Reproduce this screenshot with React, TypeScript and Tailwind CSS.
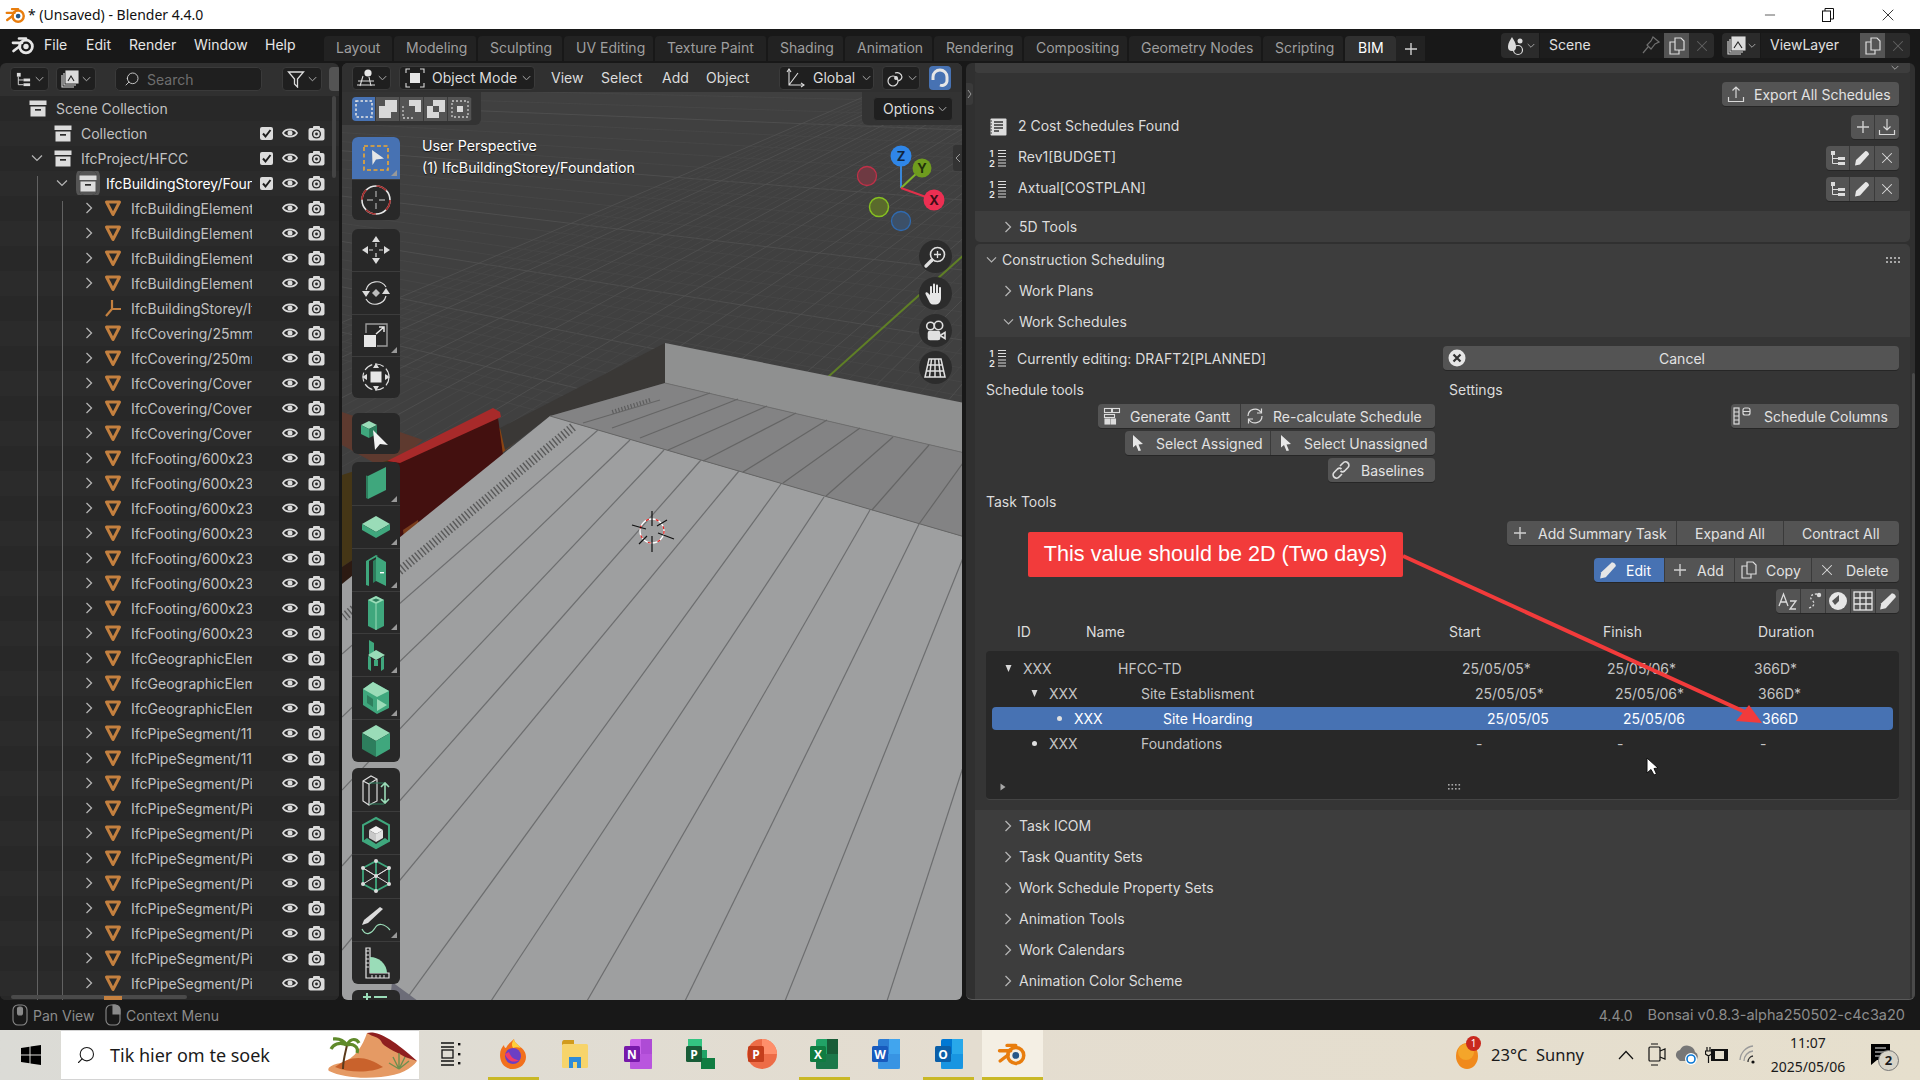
import type { ReactNode } from 'react';
import { Minus, Search, X } from 'lucide-react';

const G = '#3fa77d';
const GL = '#9adcb8';
const GD = '#2d7e5d';
const W = '#dcdcdc';

function ChevR({ c = '#b4b4b4' }: { c?: string }) {
  return (
    <svg className="shrink-0" width="8" height="12" viewBox="0 0 8 12" fill="none" stroke={c} strokeWidth="1.3">
      <path d="M1.5 1 L6.5 6 L1.5 11" />
    </svg>
  );
}

function ChevD({ c = '#b4b4b4', s = 12 }: { c?: string; s?: number }) {
  return (
    <svg className="shrink-0" width={s} height={s * 0.66} viewBox="0 0 12 8" fill="none" stroke={c} strokeWidth="1.3">
      <path d="M1 1.5 L6 6.5 L11 1.5" />
    </svg>
  );
}

function BoxIcon() {
  return (
    <svg width="18" height="17" viewBox="0 0 18 17">
      <rect x="0.5" y="0.5" width="17" height="4.5" fill={W} />
      <rect x="1.5" y="6.5" width="15" height="10" fill={W} />
      <rect x="6" y="9" width="6" height="1.7" fill="#2a2a2a" />
    </svg>
  );
}

function MeshIcon() {
  return (
    <svg width="18" height="18" viewBox="0 0 18 18" fill="none">
      <path d="M2.5 3 H15.5 L9 15.5 Z" stroke="#c4803f" strokeWidth="3" strokeLinejoin="round" />
    </svg>
  );
}

function EmptyIcon() {
  return (
    <svg width="18" height="18" viewBox="0 0 18 18" fill="none" stroke="#c4803f" strokeWidth="2.2">
      <path d="M8 1 V10 H17 M8 10 L2 17" />
    </svg>
  );
}

function EyeIcon() {
  return (
    <svg width="16" height="12" viewBox="0 0 16 12" fill="none">
      <path d="M1 6 C3.5 1.2 12.5 1.2 15 6 C12.5 10.8 3.5 10.8 1 6 Z" stroke={W} strokeWidth="1.7" />
      <circle cx="8" cy="6" r="2.5" fill={W} />
    </svg>
  );
}

function CamIcon() {
  return (
    <svg width="17" height="16" viewBox="0 0 17 16">
      <rect x="0.5" y="3" width="16" height="12.5" rx="2" fill={W} />
      <rect x="5" y="1" width="7" height="3" rx="1" fill={W} />
      <circle cx="8.5" cy="9" r="4.6" fill="#2a2a2a" />
      <circle cx="8.5" cy="9" r="3.2" fill={W} />
      <circle cx="8.5" cy="9" r="1.4" fill="#2a2a2a" />
    </svg>
  );
}

function CheckIcon() {
  return (
    <svg width="13" height="13" viewBox="0 0 13 13" fill="none">
      <rect width="13" height="13" rx="2" fill="#dcdcdc" />
      <path d="M3 6.5 L5.5 9.5 L10.5 3" stroke="#1f1f1f" strokeWidth="2" />
    </svg>
  );
}

function TreeIcon({ s = 18 }: { s?: number }) {
  return (
    <svg width={s} height={s} viewBox="0 0 18 18" fill="none">
      <rect x="2" y="2" width="4" height="4" fill={W} />
      <rect x="9" y="8" width="7" height="3" fill={W} />
      <rect x="9" y="13" width="7" height="3" fill={W} />
      <path d="M3.5 6 V14.5 H9 M3.5 9.5 H9" stroke={W} strokeWidth="1" />
    </svg>
  );
}

function PencilIcon({ s = 16 }: { s?: number }) {
  return (
    <svg width={s} height={s} viewBox="0 0 16 16">
      <path d="M11.5 1 C13.5 1 15 3 15 4.5 L6 14.5 L1 15.5 L2 10 Z" fill="#e6e6e6" />
    </svg>
  );
}

function PlainX() {
  return <X size={18} strokeWidth={1.4} color="#dcdcdc" />;
}

function PlusIcon() {
  return (
    <svg width="14" height="14" viewBox="0 0 14 14" stroke="#cfcfcf" strokeWidth="1.4">
      <path d="M7 1 V13 M1 7 H13" />
    </svg>
  );
}

function ExportIcon({ down = false }: { down?: boolean }) {
  return (
    <svg width="18" height="18" viewBox="0 0 18 18" fill="none" stroke="#d8d8d8" strokeWidth="1.2">
      <path d="M1.5 12 V16.5 H16.5 V12" />
      {down ? <path d="M9 1 V12 M5.5 8.5 L9 12 L12.5 8.5" /> : <path d="M9 13 V2 M5.5 5.5 L9 2 L12.5 5.5" />}
    </svg>
  );
}

function NotebookIcon() {
  return (
    <svg width="17" height="18" viewBox="0 0 17 18">
      <rect x="0.5" y="0.5" width="16" height="17" rx="1" fill={W} />
      <path d="M4 4 H13 M4 7 H13 M4 10 H13 M4 13 H9" stroke="#333" strokeWidth="1.4" />
      <path d="M0.5 3 H2 M0.5 6 H2 M0.5 9 H2 M0.5 12 H2 M0.5 15 H2" stroke="#333" strokeWidth="1" />
    </svg>
  );
}

function NumListIcon() {
  return (
    <svg width="18" height="18" viewBox="0 0 18 18" fill="#e6e6e6">
      <text x="0.5" y="8" fontSize="9.5" fontFamily="Inter, sans-serif" fontWeight="600">1</text>
      <text x="0" y="17.8" fontSize="9.5" fontFamily="Inter, sans-serif" fontWeight="600">2</text>
      <path d="M9 1.5 H17 M9 4.5 H17 M9 7.5 H17 M9 11 H17 M9 14 H17 M9 17 H17" stroke="#dcdcdc" strokeWidth="1.2" />
    </svg>
  );
}

function Arrowhead() {
  return (
    <svg width="14" height="18" viewBox="0 0 14 18">
      <path d="M2 1 L12 10 L7.5 10.5 L10 16.5 L7.5 17 L5 11 L2 13.5 Z" fill="#e6e6e6" />
    </svg>
  );
}

function CopyIcon() {
  return (
    <svg width="18" height="18" viewBox="0 0 18 18" fill="none" stroke="#dcdcdc" strokeWidth="1.2">
      <path d="M7 1 H13 L16 4 V13 H7 Z" />
      <path d="M7 5 H2 V17 H11 V13" />
    </svg>
  );
}

function GanttIcon() {
  return (
    <svg width="18" height="18" viewBox="0 0 18 18" fill="none" stroke="#dcdcdc" strokeWidth="1.1">
      <rect x="1.5" y="1.5" width="7" height="4" />
      <rect x="9.5" y="1.5" width="7" height="4" />
      <rect x="1.5" y="7.5" width="10" height="3" />
      <rect x="2" y="12" width="4.5" height="5" fill="#dcdcdc" />
      <rect x="8" y="12" width="4.5" height="5" fill="#dcdcdc" />
    </svg>
  );
}

function RecalcIcon() {
  return (
    <svg width="18" height="18" viewBox="0 0 18 18" fill="none" stroke="#dcdcdc" strokeWidth="1.2">
      <path d="M2 9 A7 7 0 0 1 15 5.5 M16 9 A7 7 0 0 1 3 12.5" />
      <path d="M15.5 1.5 V6 H11 M2.5 16.5 V12 H7" />
    </svg>
  );
}

function ColumnsIcon() {
  return (
    <svg width="20" height="18" viewBox="0 0 20 18" fill="none" stroke="#dcdcdc" strokeWidth="1.2">
      <rect x="1" y="1" width="5" height="16" />
      <path d="M1 5 H6 M1 9 H6 M1 13 H6" />
      <rect x="10" y="1" width="7" height="7" rx="2" />
      <path d="M10 4.5 H17" />
    </svg>
  );
}

function LinkIcon() {
  return (
    <svg width="18" height="18" viewBox="0 0 18 18" fill="none" stroke="#dcdcdc" strokeWidth="1.7">
      <path d="M8 5 L11 2 A3 3 0 0 1 16 6.5 L12.5 10 A3 3 0 0 1 8.5 10" />
      <path d="M10 13 L7 16 A3 3 0 0 1 2 11.5 L5.5 8 A3 3 0 0 1 9.5 8" />
    </svg>
  );
}

function Btn({
  icon,
  label,
  className = '',
  blue = false,
}: {
  icon?: ReactNode;
  label?: string;
  className?: string;
  blue?: boolean;
}) {
  return (
    <div
      className={`flex h-full items-center whitespace-nowrap border-r border-[#3a3a3a] text-[14px] last:border-r-0 ${
        blue ? 'bg-[#4772b3] text-white' : 'bg-[#545454] text-[#e2e2e2]'
      } ${className}`}
    >
      {icon && <span className="flex shrink-0 items-center justify-center">{icon}</span>}
      {label && <span>{label}</span>}
    </div>
  );
}

function BtnGroup({ children, className = '' }: { children: ReactNode; className?: string }) {
  return (
    <div className={`flex h-[24px] overflow-hidden rounded-[4px] shadow-[0_1px_0_#262626] ${className}`}>
      {children}
    </div>
  );
}

function Dropdown({ children, className = '' }: { children: ReactNode; className?: string }) {
  return (
    <div
      className={`flex h-[24px] shrink-0 items-center rounded-[4px] border border-[#3a3a3a] bg-[#1f1f1f] text-[14px] text-[#dcdcdc] ${className}`}
    >
      {children}
    </div>
  );
}

const ROWS: { name: string; kind: 'mesh' | 'empty' }[] = [
  ...Array(4).fill({ name: 'IfcBuildingElementProxy/Hoarding', kind: 'mesh' }),
  { name: 'IfcBuildingStorey/IfcSite', kind: 'empty' },
  { name: 'IfcCovering/25mm Screed', kind: 'mesh' },
  { name: 'IfcCovering/250mm Slab', kind: 'mesh' },
  ...Array(3).fill({ name: 'IfcCovering/Covering', kind: 'mesh' }),
  ...Array(8).fill({ name: 'IfcFooting/600x230 Strip', kind: 'mesh' }),
  ...Array(3).fill({ name: 'IfcGeographicElement/Site', kind: 'mesh' }),
  ...Array(2).fill({ name: 'IfcPipeSegment/110mm', kind: 'mesh' }),
  ...Array(10).fill({ name: 'IfcPipeSegment/Pipe', kind: 'mesh' }),
];

const LEVEL_W = ['w-[29px]', 'w-[54px]', 'w-[79px]', 'w-[104px]'];

function TreeRow({
  level,
  open,
  closed,
  icon,
  label,
  active,
  check,
  vis = true,
  odd,
}: {
  level: number;
  open?: boolean;
  closed?: boolean;
  icon: ReactNode;
  label: string;
  active?: boolean;
  check?: boolean;
  vis?: boolean;
  odd: boolean;
}) {
  return (
    <div className={`flex h-[25px] shrink-0 items-center ${odd ? 'bg-[#2b2b2b]' : 'bg-[#282828]'}`}>
      <div className="flex w-[252px] items-center overflow-hidden">
        <div className={`flex shrink-0 items-center justify-end pr-[11px] ${LEVEL_W[level]}`}>
          {open && <ChevD />}
          {closed && <ChevR />}
        </div>
        <div
          className={`flex h-[24px] w-[18px] shrink-0 items-center justify-center ${
            active ? 'rounded-[5px] bg-[#555] outline-[3px] outline-[#555]' : ''
          }`}
        >
          {icon}
        </div>
        <span
          className={`ml-[9px] whitespace-nowrap text-[14px] ${active ? 'text-white' : 'text-[#c2c2c2]'}`}
        >
          {label}
        </span>
      </div>
      {vis && (
        <div className="flex items-center">
          <div className="flex w-[26px] justify-center pl-[2px]">{check && <CheckIcon />}</div>
          <div className="flex w-[24px] justify-center">
            <EyeIcon />
          </div>
          <div className="ml-[1px] flex w-[26px] justify-center">
            <CamIcon />
          </div>
        </div>
      )}
    </div>
  );
}

function Outliner() {
  return (
    <div className="relative flex h-full w-[339px] flex-col overflow-hidden rounded-[6px] bg-[#303030] [font-feature-settings:'calt'_0]">
      <div className="flex h-[32.5px] shrink-0 items-center pl-[10px]">
        <Dropdown className="w-[39px] justify-center gap-[3px]">
          <TreeIcon s={17} />
          <ChevD s={9} />
        </Dropdown>
        <Dropdown className="ml-[7px] w-[40px] justify-center gap-[3px]">
          <svg width="18" height="18" viewBox="0 0 18 18" fill="none" stroke="#dcdcdc" strokeWidth="1.1">
            <rect x="5" y="1" width="12" height="12" fill="#dcdcdc" />
            <path d="M7 11 L10 6 L13 11" stroke="#222" />
            <path d="M3 3 V15 H15 M1 5 V17 H13" />
          </svg>
          <ChevD s={9} />
        </Dropdown>
        <Dropdown className="ml-[19px] w-[147px] gap-[7px] rounded-[5px] pl-[8px]">
          <Search size={16} color="#cfcfcf" strokeWidth={1.4} className="-scale-x-100" />
          <span className="text-[#6e6e6e]">Search</span>
        </Dropdown>
        <Dropdown className="ml-[20px] w-[40px] justify-center gap-[3px]">
          <svg width="18" height="18" viewBox="0 0 18 18" fill="none" stroke="#dcdcdc" strokeWidth="1.3">
            <path d="M1.5 2 H16.5 L10.5 9 V17 L7.5 14 V9 Z" />
          </svg>
          <ChevD s={9} />
        </Dropdown>
        <div className="ml-[7px] h-[24px] w-[20px] shrink-0 rounded-[4px] bg-[#545454]" />
      </div>
      <div className="flex min-h-0 flex-1 flex-col">
        <TreeRow level={0} icon={<BoxIcon />} label="Scene Collection" vis={false} odd={false} />
        <TreeRow level={1} icon={<BoxIcon />} label="Collection" check odd />
        <TreeRow level={1} open icon={<BoxIcon />} label="IfcProject/HFCC" check odd={false} />
        <TreeRow level={2} open icon={<BoxIcon />} label="IfcBuildingStorey/Foundation" active check odd />
        {ROWS.map((r, i) => (
          <TreeRow
            key={i}
            level={3}
            closed={r.kind === 'mesh'}
            icon={r.kind === 'mesh' ? <MeshIcon /> : <EmptyIcon />}
            label={r.name}
            odd={i % 2 === 1}
          />
        ))}
      </div>
      <div className="absolute bottom-0 left-[37px] top-[113px] w-px bg-[#626262]" />
      <div className="absolute bottom-0 left-[62px] top-[138px] w-px bg-[#626262]" />
      <div className="absolute right-[3px] top-[33px] h-[82px] w-[4px] rounded bg-[#444]" />
      <div className="absolute bottom-[1px] left-[11px] h-[4px] w-[176px] rounded bg-[#4a4a4a]" />
      <div className="absolute bottom-0 left-[104px] h-[4px] w-[18px] bg-[#c4803f]" />
    </div>
  );
}

function SceneSvg() {
  const gridA = Array.from({ length: 34 }, (_, i) => i);
  const gridB = Array.from({ length: 70 }, (_, i) => i);
  const floorLines = [
    [598, 430, 342, 654],
    [630, 440, 342, 717],
    [664, 450, 342, 790],
    [701, 460, 342, 866],
    [739, 471, 342, 950],
    [781, 484, 405, 1001],
    [824, 497, 491, 1001],
    [870, 510, 587, 1001],
    [919, 524, 685, 1001],
    [965, 553, 785, 1001],
    [965, 761, 887, 1001],
  ];
  const topLines = [
    [919, 524, 965, 460],
    [872, 510, 929, 445],
    [826, 496, 893, 437],
    [783, 483, 860, 428],
    [743, 472, 827, 420],
    [703, 461, 796, 413],
    [668, 450, 767, 406],
    [640, 438, 738, 399],
    [612, 428, 710, 393],
    [583, 423, 660, 400],
  ];
  return (
    <svg
      className="absolute inset-0"
      width="620"
      height="937"
      viewBox="342 63 620 937"
    >
      <rect x="342" y="63" width="620" height="937" fill="#404040" />
      {gridA.map((i) => {
        const y = 60 + i * 14;
        return (
          <line
            key={i}
            x1={-800}
            y1={60}
            x2={962}
            y2={y}
            stroke={i % 5 === 0 ? '#525252' : '#474747'}
            strokeWidth="0.8"
          />
        );
      })}
      {gridB.map((i) => {
        const x = -300 + i * 24;
        return (
          <line
            key={i}
            x1={1400}
            y1={-135}
            x2={x}
            y2={600}
            stroke={i % 5 === 0 ? '#525252' : '#474747'}
            strokeWidth="0.8"
          />
        );
      })}
      <line x1="828" y1="377" x2="965" y2="254" stroke="#5f7f26" strokeWidth="2" />
      <polygon points="342,412 423,440 387,470 342,445" fill="#5e3a2f" />
      <polygon points="342,475 405,455 405,525 342,567" fill="#453616" />
      <polygon points="342,567 405,525 405,560 342,602" fill="#2c1a12" />
      <polygon points="497,428 525,433 500,455" fill="#8a4413" />
      <polygon points="385,463 497,410 503,455 402,540 385,540" fill="#43100f" />
      <polygon points="387,461 493,408 500,412 501,417 400,463" fill="#a82a2a" />
      <polygon points="403,530 418,520 420,535 405,545" fill="#7a3d1c" />
      <polygon points="665,343 500,428 505,450 550,416 665,383" fill="#3a3836" />
      <polygon points="665,343 965,403 965,453 665,383" fill="#8f9090" />
      <polygon points="550,416 665,383 965,453 965,537" fill="#838384" />
      <polygon points="550,416 965,537 965,1001 342,1001 342,584" fill="#9e9fa0" />
      <line x1="550" y1="416" x2="965" y2="537" stroke="#666" strokeWidth="1" />
      <line x1="665" y1="383" x2="965" y2="453" stroke="#6f6f6f" strokeWidth="1" />
      {floorLines.map((l, i) => (
        <line key={i} x1={l[0]} y1={l[1]} x2={l[2]} y2={l[3]} stroke="#6d6e6f" strokeWidth="1.2" />
      ))}
      {topLines.map((l, i) => (
        <line key={i} x1={l[0]} y1={l[1]} x2={l[2]} y2={l[3]} stroke="#656565" strokeWidth="1.2" />
      ))}
      <line x1="573" y1="427" x2="344" y2="617" stroke="#2d2d2d" strokeWidth="9" strokeDasharray="1.4 2.4" opacity="0.6" />
      <line x1="650" y1="400" x2="612" y2="412" stroke="#444" strokeWidth="4" strokeDasharray="1.2 2" opacity="0.6" />
      <polygon points="390,1001 392,982 418,1001" fill="#6c6c78" />

      {/* 3d cursor */}
      <circle cx="652" cy="531" r="12" fill="none" stroke="#fff" strokeWidth="1.3" />
      <circle cx="652" cy="531" r="12" fill="none" stroke="#e02020" strokeWidth="1.3" strokeDasharray="3 7" />
      <path
        d="M652 511 V526 M652 536 V552 M632 525 L646 529 M658 533 L674 539 M667 520 L657 526 M647 536 L639 544"
        stroke="#111"
        strokeWidth="1.2"
      />

      {/* gizmo */}
      <line x1="901" y1="188" x2="901" y2="165" stroke="#3a86d8" strokeWidth="2" />
      <line x1="901" y1="188" x2="918" y2="172" stroke="#7fb32a" strokeWidth="2" />
      <line x1="901" y1="188" x2="926" y2="197" stroke="#e0304a" strokeWidth="2" />
      <circle cx="867" cy="176" r="9.5" fill="#6e3a42" stroke="#c03048" strokeWidth="1.3" />
      <circle cx="879" cy="207" r="9.5" fill="#5a6a2c" stroke="#85c020" strokeWidth="1.5" />
      <circle cx="901" cy="221" r="9.5" fill="#3c5068" stroke="#2f6ab0" strokeWidth="1.3" />
      <circle cx="901" cy="156" r="10.5" fill="#2f86e8" />
      <circle cx="922" cy="168" r="9.5" fill="#6f9c1e" />
      <circle cx="934" cy="200" r="10.5" fill="#ec2f52" />
      <text x="901" y="161" textAnchor="middle" fontSize="13" fontWeight="700" fontFamily="Inter, sans-serif" fill="#12263f">Z</text>
      <text x="922" y="173" textAnchor="middle" fontSize="13" fontWeight="700" fontFamily="Inter, sans-serif" fill="#22300a">Y</text>
      <text x="934" y="205" textAnchor="middle" fontSize="13" fontWeight="700" fontFamily="Inter, sans-serif" fill="#3f0c16">X</text>
    </svg>
  );
}

function ToolCell({
  children,
  h,
  blue,
  corner,
}: {
  children: ReactNode;
  h: string;
  blue?: boolean;
  corner?: boolean;
}) {
  return (
    <div
      className={`relative flex w-full items-center justify-center border-t border-[#3c3c3c] first:border-t-0 ${h} ${
        blue ? 'bg-[#4772b3]' : ''
      }`}
    >
      {children}
      {corner && (
        <svg className="absolute bottom-[3px] right-[3px]" width="6" height="6" viewBox="0 0 6 6">
          <path d="M6 0 V6 H0 Z" fill="#999" />
        </svg>
      )}
    </div>
  );
}

function ToolGroup({ children, className = '' }: { children: ReactNode; className?: string }) {
  return <div className={`w-[48px] overflow-hidden rounded-[6px] bg-[#282828] ${className}`}>{children}</div>;
}

function Toolbar() {
  return (
    <div className="flex w-[48px] shrink-0 flex-col">
      <ToolGroup>
        <ToolCell h="h-[42px]" blue corner>
          <svg width="30" height="30" viewBox="0 0 30 30" fill="none">
            <rect x="3" y="3" width="24" height="24" stroke="#f0a830" strokeWidth="1.6" strokeDasharray="4 2.5" />
            <path d="M11 7 L23 15.5 L15 16.5 L11.5 22 Z" fill="#e6e6e6" />
          </svg>
        </ToolCell>
        <ToolCell h="h-[41px]">
          <svg width="32" height="32" viewBox="0 0 32 32" fill="none">
            <circle cx="16" cy="16" r="14" stroke="#e6e6e6" strokeWidth="1.6" />
            <circle cx="16" cy="16" r="14" stroke="#a02a2a" strokeWidth="1.7" strokeDasharray="11 11" />
            <path d="M16 7 V13 M16 19 V25 M7 16 H13 M19 16 H25" stroke="#9a9a9a" strokeWidth="1.4" />
          </svg>
        </ToolCell>
      </ToolGroup>
      <ToolGroup className="mt-[9px]">
        <ToolCell h="h-[42.25px]">
          <svg width="30" height="30" viewBox="0 0 30 30" fill="#dcdcdc">
            <path d="M15 1 L19 7 H11 Z M15 29 L19 23 H11 Z M1 15 L7 11 V19 Z M29 15 L23 11 V19 Z" />
            <path d="M15 8 V12 M15 18 V22 M8 15 H12 M18 15 H22" stroke="#dcdcdc" strokeWidth="1.2" />
          </svg>
        </ToolCell>
        <ToolCell h="h-[42.25px]">
          <svg width="30" height="30" viewBox="0 0 30 30" fill="none" stroke="#dcdcdc" strokeWidth="1.2">
            <path d="M5 12 A11 11 0 0 1 25 9 M25 18 A11 11 0 0 1 5 21" />
            <path d="M1 13 H9 L5 19 Z M21 16 H29 L25 10 Z" fill="#dcdcdc" stroke="none" />
            <path d="M15 11 L19 15 L15 19 L11 15 Z" fill="#bdbdbd" stroke="none" />
          </svg>
        </ToolCell>
        <ToolCell h="h-[42.25px]" corner>
          <svg width="26" height="26" viewBox="0 0 26 26" fill="none">
            <path d="M3 11 V2 H24 V24 H14" stroke="#9a9a9a" strokeWidth="1.4" />
            <rect x="1" y="13" width="12" height="12" fill="#e6e6e6" />
            <path d="M13 12 L21 5 M16 5 H21 V10" stroke="#e6e6e6" strokeWidth="1.5" />
          </svg>
        </ToolCell>
        <ToolCell h="h-[42.25px]">
          <svg width="32" height="32" viewBox="0 0 32 32" fill="none">
            <circle cx="16" cy="16" r="13" stroke="#dcdcdc" strokeWidth="1.2" strokeDasharray="9 3" />
            <rect x="10.5" y="10.5" width="11" height="11" fill="#e6e6e6" />
            <path d="M16 2 L19 7 H13 Z M16 30 L19 25 H13 Z M2 16 L7 13 V19 Z M30 16 L25 13 V19 Z" fill="#dcdcdc" />
          </svg>
        </ToolCell>
      </ToolGroup>
      <ToolGroup className="mt-[15px]">
        <ToolCell h="h-[41px]">
          <svg width="34" height="34" viewBox="0 0 34 34">
            <path d="M10 4 L18 8 L10 12 L2 8 Z" fill={GL} />
            <path d="M2 8 L10 12 V21 L2 17 Z" fill={G} />
            <path d="M10 12 L18 8 V17 L10 21 Z" fill={GD} />
            <path d="M14 13 L29 28 L21 27 L16 33 Z" fill="#f2f2f2" />
          </svg>
        </ToolCell>
      </ToolGroup>
      <ToolGroup className="mt-[8px]">
        <ToolCell h="h-[42.86px]" corner>
          <svg width="24" height="34" viewBox="0 0 24 34">
            <path d="M4 10 L22 1 V24 L4 33 Z" fill={G} />
            <path d="M2 9.5 L4 10 V33 L2 32 Z" fill={GD} />
          </svg>
        </ToolCell>
        <ToolCell h="h-[42.86px]" corner>
          <svg width="30" height="24" viewBox="0 0 30 24">
            <path d="M15 1 L29 9 L15 17 L1 9 Z" fill={GL} />
            <path d="M1 9 L15 17 V23 L1 15 Z" fill={G} />
            <path d="M29 9 L15 17 V23 L29 15 Z" fill={G} />
          </svg>
        </ToolCell>
        <ToolCell h="h-[42.86px]" corner>
          <svg width="24" height="34" viewBox="0 0 24 34">
            <path d="M2 8 L12 2 L14 3 L5 8 V33 L2 32 Z" fill={G} />
            <path d="M12 3 L22 9 V33 L12 28 Z" fill={G} />
            <path d="M9 8 L12 6 V28 L9 30 Z" fill={GD} />
            <rect x="16" y="19" width="4" height="1.4" fill="#fff" />
          </svg>
        </ToolCell>
        <ToolCell h="h-[42.86px]" corner>
          <svg width="18" height="36" viewBox="0 0 18 36">
            <path d="M9 1 L17 5 V31 L9 35 L1 31 V5 Z" fill={G} />
            <path d="M9 1 L17 5 L9 9 L1 5 Z" fill={GL} />
            <path d="M9 3.5 L13 5 L9 7 L5 5 Z" fill={GD} />
            <path d="M9 9 V35" stroke={GL} strokeWidth="1" />
          </svg>
        </ToolCell>
        <ToolCell h="h-[42.86px]" corner>
          <svg width="20" height="34" viewBox="0 0 20 34" fill={G}>
            <path d="M3 2 L8 5 V17 L3 20 Z" />
            <path d="M10 12 L19 17 L10 22 L2 17 Z" fill={GL} />
            <path d="M2 18 L5 20 V33 L2 31 Z M15 20 L18 18 V31 L15 33 Z M8 22 H12 V28 H8 Z" />
          </svg>
        </ToolCell>
        <ToolCell h="h-[42.86px]" corner>
          <svg width="30" height="34" viewBox="0 0 30 34">
            <path d="M12 1 L28 10 V27 L16 33 L2 24 V8 Z" fill={G} />
            <path d="M12 1 L28 10 L16 16 L2 8 Z" fill={GL} />
            <path d="M16 18 L26 24 L16 30 Z" fill={GL} />
            <path d="M6 14 L12 18 V26 L6 22 Z" fill={GD} />
          </svg>
        </ToolCell>
        <ToolCell h="h-[42.86px]">
          <svg width="30" height="34" viewBox="0 0 30 34">
            <path d="M15 1 L29 9 L15 17 L1 9 Z" fill={GL} />
            <path d="M1 9 L15 17 V33 L1 25 Z" fill={GD} />
            <path d="M29 9 L15 17 V33 L29 25 Z" fill={G} />
          </svg>
        </ToolCell>
      </ToolGroup>
      <ToolGroup className="mt-[6px]">
        <ToolCell h="h-[43.2px]">
          <svg width="32" height="32" viewBox="0 0 32 32" fill="none" stroke="#dcdcdc" strokeWidth="1.2">
            <path d="M3 7 L11 2 L17 5 V27 L9 31 L3 27 Z M3 7 L9 10 L17 5 M9 10 V31" />
            <path d="M9 9 H24 M9 30 H24" stroke={GD} />
            <path d="M25 9 V29 M21 13 L25 9 L29 13 M21 25 L25 29 L29 25" stroke={GL} strokeWidth="1.6" />
          </svg>
        </ToolCell>
        <ToolCell h="h-[43.2px]">
          <svg width="30" height="34" viewBox="0 0 30 34" fill="none">
            <path d="M15 2 L28 9 V25 L15 32 L2 25 V9 Z" stroke={G} strokeWidth="2" />
            <path d="M2 25 L15 32 L28 25 L24 22 L15 28 L6 22 Z" fill={G} />
            <path d="M15 10 L22 14 L15 18 L8 14 Z" fill="#f2f2f2" />
            <path d="M8 14 L15 18 V26 L8 22 Z" fill="#c8c8c8" />
            <path d="M22 14 L15 18 V26 L22 22 Z" fill="#e0e0e0" />
          </svg>
        </ToolCell>
        <ToolCell h="h-[43.2px]">
          <svg width="30" height="34" viewBox="0 0 30 34" fill="none">
            <path d="M15 2 L28 9 V25 L15 32 L2 25 V9 Z M15 2 V32" stroke={G} strokeWidth="1.8" />
            <path d="M2 9 L28 25 M28 9 L2 25 M15 17 L2 9 M15 17 L28 9" stroke="#dcdcdc" strokeWidth="1" />
            {[[15, 2], [28, 9], [28, 25], [15, 32], [2, 25], [2, 9], [15, 17]].map(([x, y]) => (
              <circle key={`${x}-${y}`} cx={x} cy={y} r="2" fill="#dcdcdc" />
            ))}
          </svg>
        </ToolCell>
        <ToolCell h="h-[43.2px]" corner>
          <svg width="32" height="30" viewBox="0 0 32 30" fill="none">
            <path d="M20 2 L23 4 L8 18 L2 20 L4 15 Z" fill="#dcdcdc" />
            <path d="M2 24 C6 32 12 28 15 23 C18 18 24 18 30 25" stroke={GL} strokeWidth="1.2" />
          </svg>
        </ToolCell>
        <ToolCell h="h-[43.2px]">
          <svg width="28" height="32" viewBox="0 0 28 32" fill="none">
            <path d="M4 1 H8 V26 H27 V31 H4 Z" stroke="#e6e6e6" strokeWidth="1.2" />
            <path d="M8 10 A17 17 0 0 1 25 26 H8 Z" fill={GL} />
            <path d="M4 4 H7 M4 8 H7 M4 12 H7 M4 16 H7 M4 20 H7 M10 31 V28 M14 31 V28 M18 31 V28 M22 31 V28" stroke="#e6e6e6" strokeWidth="1" />
          </svg>
        </ToolCell>
      </ToolGroup>
      <ToolGroup className="mt-[6px]">
        <div className="flex h-[40px] items-start gap-[3px] pl-[10px] pt-[2px]">
          <svg width="26" height="12" viewBox="0 0 26 12" stroke={GL} strokeWidth="2">
            <path d="M5 1 V9 M1 5 H9 M12 5 H25" />
          </svg>
        </div>
      </ToolGroup>
    </div>
  );
}

function NavCircle({ children }: { children: ReactNode }) {
  return (
    <div className="flex h-[33px] w-[33px] items-center justify-center rounded-full bg-[#2c2c2c]">{children}</div>
  );
}

function Viewport() {
  return (
    <div className="relative h-full w-[620px] shrink-0 overflow-hidden rounded-[6px] font-['Inter',sans-serif]">
      <SceneSvg />
      <div className="relative z-10 flex h-[29px] items-center bg-[#303030] pl-[10px] text-[14px] text-[#dcdcdc]">
        <Dropdown className="w-[39px] justify-center gap-[2px]">
          <svg width="20" height="20" viewBox="0 0 20 20" fill="none" stroke="#dcdcdc" strokeWidth="1.1">
            <circle cx="12" cy="5" r="3.6" fill="#e6e6e6" stroke="none" />
            <path d="M2 13 H18 M7 8 L4 18 M13 9 L15 18 M1 17 H19" />
          </svg>
          <ChevD s={9} />
        </Dropdown>
        <Dropdown className="ml-[8px] w-[136px] pl-[5px]">
          <svg width="20" height="20" viewBox="0 0 20 20" fill="none" stroke="#dcdcdc" strokeWidth="1.1">
            <rect x="5" y="5" width="10" height="10" fill="#e6e6e6" stroke="none" />
            <path d="M1 5 V1 H5 M15 1 H19 V5 M19 15 V19 H15 M5 19 H1 V15" />
          </svg>
          <span className="ml-[7px]">Object Mode</span>
          <span className="ml-auto mr-[3px]">
            <ChevD s={9} />
          </span>
        </Dropdown>
        <span className="ml-[16px] w-[50px]">View</span>
        <span className="w-[61px]">Select</span>
        <span className="w-[44px]">Add</span>
        <span className="w-[73px]">Object</span>
        <Dropdown className="w-[95px] pl-[5px]">
          <svg width="20" height="20" viewBox="0 0 20 20" fill="none" stroke="#dcdcdc" strokeWidth="1.1">
            <path d="M4 1 V17 H19 M4 17 L13 5" />
            <path d="M2 4 L4 1 L6 4 M16 15 L19 17 L16 19" />
          </svg>
          <span className="ml-[8px]">Global</span>
          <span className="ml-auto mr-[2px]">
            <ChevD s={9} />
          </span>
        </Dropdown>
        <Dropdown className="ml-[8px] w-[38px] justify-center gap-[2px]">
          <svg width="20" height="20" viewBox="0 0 20 20" fill="none" stroke="#dcdcdc" strokeWidth="1.2">
            <circle cx="7" cy="13" r="5" />
            <path d="M9 5 A5 5 0 0 1 16 9 A5 5 0 0 1 12 13" />
            <circle cx="10" cy="10" r="1.3" fill="#dcdcdc" />
          </svg>
          <ChevD s={9} />
        </Dropdown>
        <div className="ml-[9px] flex h-[24px] w-[22px] items-center justify-center rounded-[4px] bg-[#4772b3]">
          <svg width="20" height="20" viewBox="0 0 20 20" fill="none" stroke="#e6e6e6" strokeWidth="3">
            <path d="M3 12 V9 A7 7 0 0 1 17 9 V12 A5 5 0 0 1 10 17" />
          </svg>
        </div>
      </div>
      <div className="relative z-10 flex h-[34px] items-start justify-between">
        <div className="flex h-[33px] w-[139px] items-center rounded-br-[6px] bg-[#333] pl-[10px]">
          <div className="flex h-[24px] overflow-hidden rounded-[4px]">
            {[0, 1, 2, 3, 4].map((i) => (
              <div
                key={i}
                className={`flex h-full w-[24px] items-center justify-center border-r border-[#3a3a3a] ${
                  i === 0 ? 'bg-[#4772b3]' : 'bg-[#545454]'
                }`}
              >
                <svg width="20" height="20" viewBox="0 0 20 20" fill="none">
                  {i === 0 && <rect x="2" y="2" width="16" height="16" stroke="#e6e6e6" strokeWidth="1.5" strokeDasharray="2.5 2" />}
                  {i === 1 && <path d="M7 1 H19 V13 H13 V19 H1 V7 H7 Z" fill="#d8d8d8" />}
                  {i === 2 && (
                    <>
                      <path d="M7 1 H19 V13 H13 V7 H7 Z" fill="#d8d8d8" />
                      <path d="M1 7 V19 H13" stroke="#c8c8c8" strokeWidth="1.3" strokeDasharray="2 2" />
                    </>
                  )}
                  {i === 3 && (
                    <>
                      <path d="M7 1 H19 V13 H13 V7 H7 Z" fill="#d8d8d8" />
                      <path d="M1 7 H7 V13 H13 V19 H1 Z" fill="#d8d8d8" />
                    </>
                  )}
                  {i === 4 && (
                    <>
                      <rect x="2" y="2" width="16" height="16" stroke="#c8c8c8" strokeWidth="1.3" strokeDasharray="2 2" />
                      <rect x="7" y="7" width="6" height="6" fill="#d8d8d8" />
                    </>
                  )}
                </svg>
              </div>
            ))}
          </div>
        </div>
        <div className="flex h-[33px] w-[100px] items-center rounded-bl-[6px] bg-[#333] pl-[11px]">
          <Dropdown className="w-[80px] border-[#333] pl-[9px]">
            <span>Options</span>
            <span className="ml-auto mr-[5px]">
              <ChevD s={9} />
            </span>
          </Dropdown>
        </div>
      </div>
      <div className="relative z-10 flex pl-[10px] pt-[11px]">
        <Toolbar />
        <div className="ml-[22px] -mt-[2px] flex flex-col text-[14.2px] text-white [text-shadow:0_1px_1px_#111]">
          <span className="leading-[22px]">User Perspective</span>
          <span className="leading-[22px]">(1) IfcBuildingStorey/Foundation</span>
        </div>
      </div>
      <div className="absolute right-[10.5px] top-[177px] z-10 flex flex-col gap-[4px]">
        <NavCircle>
          <svg width="24" height="24" viewBox="0 0 24 24" fill="none" stroke="#e0e0e0">
            <circle cx="14.5" cy="9.5" r="7" strokeWidth="1.6" />
            <path d="M9 15 L3 21" strokeWidth="3.4" strokeLinecap="round" />
            <path d="M14.5 6 V13 M11 9.5 H18" strokeWidth="1.3" />
          </svg>
        </NavCircle>
        <NavCircle>
          <svg width="22" height="24" viewBox="0 0 22 24" fill="#e6e6e6">
            <path d="M6 21 L1.5 12 C1 10 3 9.5 4 11 L6 13 V5 C6 3.5 8 3.5 8 5 V11 H9 V2.5 C9 1 11 1 11 2.5 V11 H12 V3.5 C12 2 14 2 14 3.5 V11 H15 V6 C15 4.5 17 4.5 17 6 V16 C17 19 15 22.5 12 22.5 H9 C8 22.5 7 22 6 21 Z" />
          </svg>
        </NavCircle>
        <NavCircle>
          <svg width="24" height="24" viewBox="0 0 24 24" fill="none" stroke="#e0e0e0" strokeWidth="1.6">
            <circle cx="7.5" cy="7" r="3.8" />
            <circle cx="15.5" cy="6.5" r="4.2" />
            <rect x="5.5" y="12.5" width="11" height="8" rx="1.5" fill="#e0e0e0" />
            <path d="M17 16.5 L22 13.5 V19.5 Z" />
          </svg>
        </NavCircle>
        <NavCircle>
          <svg width="24" height="22" viewBox="0 0 24 22" fill="none" stroke="#e0e0e0" strokeWidth="1.5">
            <path d="M6 2 H18 L22 20 H2 Z M12 2 V20 M8.5 2 L6.5 20 M15.5 2 L17.5 20 M4.6 8 H19.4 M3.5 14 H20.5" />
          </svg>
        </NavCircle>
      </div>
      <div className="absolute right-0 top-[82px] z-10 flex h-[26px] w-[9px] items-center justify-center rounded-l-[3px] bg-[#333]">
        <svg width="6" height="10" viewBox="0 0 6 10" fill="none" stroke="#999">
          <path d="M5 1 L1 5 L5 9" />
        </svg>
      </div>
    </div>
  );
}

function PropRow({
  label,
  open,
  sub = true,
  children,
}: {
  label: string;
  open?: boolean;
  sub?: boolean;
  children?: ReactNode;
}) {
  return (
    <div className={`flex h-[31px] shrink-0 items-center text-[14px] text-[#dcdcdc] ${sub ? 'pl-[29px]' : 'pl-[12px]'}`}>
      <div className="flex w-[8px] justify-center">{open ? <ChevD s={11} /> : <ChevR />}</div>
      <span className="ml-[7px]">{label}</span>
      {children}
    </div>
  );
}

function TaskRow({
  marker,
  tri,
  xx,
  nameW,
  name,
  start,
  startW,
  finish,
  finishW,
  dur,
  sel,
}: {
  marker: string;
  tri?: boolean;
  xx: string;
  nameW: string;
  name: string;
  start: string;
  startW: string;
  finish: string;
  finishW: string;
  dur: string;
  sel?: boolean;
}) {
  return (
    <div className={`flex items-center text-[14px] ${sel ? 'mx-[6px] my-[1px] h-[23px] rounded-[4px] bg-[#4772b3] text-white' : 'h-[25px] text-[#c4c4c4]'}`}>
      <div className={`flex items-center ${marker}`}>
        {tri ? (
          <svg width="7" height="9" viewBox="0 0 7 9">
            <path d="M0.5 1 H6.5 L3.5 8 Z" fill="#d8d8d8" />
          </svg>
        ) : (
          <span className="ml-[1px] h-[5px] w-[5px] rounded-full bg-[#e0e0e0]" />
        )}
      </div>
      <span className={xx}>XXX</span>
      <span className={nameW}>{name}</span>
      <span className={startW}>{start}</span>
      <span className={finishW}>{finish}</span>
      <span>{dur}</span>
    </div>
  );
}

function Properties() {
  return (
    <div className="relative flex h-full w-[949px] shrink-0 flex-col overflow-hidden rounded-[6px] border-b border-[#5a5a5a] bg-[#303030] font-['Inter',sans-serif]">
      <div className="ml-[9px] mr-[5px] flex h-[10px] shrink-0 items-center justify-end rounded-b-[3px] bg-[#3d3d3d] pr-[11px]">
        <ChevD s={8} />
      </div>
      <div className="ml-[9px] mr-[5px] flex h-[138px] shrink-0 flex-col bg-[#333] px-[11px] text-[14px] text-[#dcdcdc]">
        <div className="mt-[9px] flex justify-end">
          <BtnGroup>
            <Btn icon={<ExportIcon />} label="Export All Schedules" className="w-[177px] gap-[9px] pl-[5px]" />
          </BtnGroup>
        </div>
        <div className="mt-[9px] flex h-[24px] items-center">
          <div className="ml-[3px] flex w-[18px] justify-center">
            <NotebookIcon />
          </div>
          <span className="mb-[3px] ml-[11px]">2 Cost Schedules Found</span>
          <BtnGroup className="ml-auto">
            <Btn icon={<PlusIcon />} className="w-[24px] justify-center" />
            <Btn icon={<ExportIcon down />} className="w-[24px] justify-center" />
          </BtnGroup>
        </div>
        {['Rev1[BUDGET]', 'Axtual[COSTPLAN]'].map((t) => (
          <div key={t} className="mt-[7px] flex h-[24px] items-center">
            <div className="ml-[3px] flex w-[18px] justify-center">
              <NumListIcon />
            </div>
            <span className="mb-[3px] ml-[11px]">{t}</span>
            <BtnGroup className="ml-auto">
              <Btn icon={<TreeIcon />} className="w-[24px] justify-center" />
              <Btn icon={<PencilIcon />} className="w-[25px] justify-center" />
              <Btn icon={<PlainX />} className="w-[24px] justify-center" />
            </BtnGroup>
          </div>
        ))}
      </div>
      <div className="ml-[9px] mr-[5px] shrink-0 rounded-b-[5px] bg-[#3d3d3d]">
        <PropRow label="5D Tools" />
      </div>
      <div className="ml-[9px] mr-[5px] mt-[2px] flex min-h-0 flex-1 flex-col overflow-hidden rounded-t-[5px] bg-[#3d3d3d]">
        <PropRow label="Construction Scheduling" open sub={false}>
          <svg className="ml-auto mr-[9px]" width="16" height="8" viewBox="0 0 16 8" fill="#a8a8a8">
            {[0, 1, 2, 3].map((i) => (
              <g key={i}>
                <rect x={i * 4 + 1} y="1" width="2" height="2" />
                <rect x={i * 4 + 1} y="5" width="2" height="2" />
              </g>
            ))}
          </svg>
        </PropRow>
        <PropRow label="Work Plans" />
        <PropRow label="Work Schedules" open />
        <div className="flex shrink-0 flex-col bg-[#353535] px-[11px] pb-[10px] text-[14px] text-[#dcdcdc]">
          <div className="mt-[9px] flex h-[24px] items-center">
            <div className="ml-[3px] flex w-[18px] justify-center">
              <NumListIcon />
            </div>
            <span className="ml-[10px]">Currently editing: DRAFT2[PLANNED]</span>
            <BtnGroup className="ml-auto">
              <div className="relative flex h-full w-[456px] items-center justify-center bg-[#545454] text-[#e2e2e2]">
                <svg className="absolute left-[5px]" width="18" height="18" viewBox="0 0 18 18">
                  <circle cx="9" cy="9" r="8.5" fill="#e6e6e6" />
                  <path d="M5.5 5.5 L12.5 12.5 M12.5 5.5 L5.5 12.5" stroke="#333" strokeWidth="2.2" />
                </svg>
                <span className="ml-[22px]">Cancel</span>
              </div>
            </BtnGroup>
          </div>
          <div className="mt-[9px] flex h-[20px] items-center">
            <span className="w-[463px]">Schedule tools</span>
            <span>Settings</span>
          </div>
          <div className="mt-[5px] flex">
            <div className="flex w-[449px] flex-col items-end gap-[3px]">
              <BtnGroup>
                <Btn icon={<GanttIcon />} label="Generate Gantt" className="w-[143px] gap-[9px] pl-[5px]" />
                <Btn icon={<RecalcIcon />} label="Re-calculate Schedule" className="w-[194px] gap-[9px] pl-[5px]" />
              </BtnGroup>
              <BtnGroup>
                <Btn icon={<Arrowhead />} label="Select Assigned" className="w-[146px] gap-[11px] pl-[6px]" />
                <Btn icon={<Arrowhead />} label="Select Unassigned" className="w-[164px] gap-[11px] pl-[8px]" />
              </BtnGroup>
              <BtnGroup>
                <Btn icon={<LinkIcon />} label="Baselines" className="w-[107px] gap-[11px] pl-[4px]" />
              </BtnGroup>
            </div>
            <div className="ml-auto">
              <BtnGroup>
                <Btn icon={<ColumnsIcon />} label="Schedule Columns" className="w-[168px] gap-[11px] pl-[2px]" />
              </BtnGroup>
            </div>
          </div>
          <div className="mt-[9px] flex h-[20px] items-center">Task Tools</div>
          <div className="mt-[10px] flex justify-end">
            <BtnGroup>
              <Btn icon={<PlusIcon />} label="Add Summary Task" className="w-[170px] gap-[11px] pl-[6px]" />
              <Btn label="Expand All" className="w-[107px] pl-[18px]" />
              <Btn label="Contract All" className="w-[115px] pl-[18px]" />
            </BtnGroup>
          </div>
          <div className="mt-[13px] flex justify-end">
            <BtnGroup>
              <Btn blue icon={<PencilIcon s={18} />} label="Edit" className="w-[71px] gap-[9px] pl-[5px]" />
              <Btn icon={<PlusIcon />} label="Add" className="w-[70px] gap-[10px] pl-[8px]" />
              <Btn icon={<CopyIcon />} label="Copy" className="w-[77px] gap-[8px] pl-[5px]" />
              <Btn icon={<PlainX />} label="Delete" className="w-[87px] gap-[10px] pl-[6px]" />
            </BtnGroup>
          </div>
          <div className="mt-[7px] flex justify-end">
            <BtnGroup>
              <Btn
                icon={
                  <svg width="20" height="20" viewBox="0 0 20 20" fill="none" stroke="#dcdcdc" strokeWidth="1.3">
                    <path d="M1 15 L5.5 3 L10 15 M2.5 11 H8.5 M12 10 H18 L12 18 H18" />
                  </svg>
                }
                className="w-[25px] justify-center"
              />
              <Btn
                icon={
                  <svg width="20" height="20" viewBox="0 0 20 20" fill="none" stroke="#dcdcdc" strokeWidth="1.3" strokeDasharray="2 2">
                    <path d="M14 3 C8 3 6 6 9 9 C12 12 12 15 6 17" />
                    <circle cx="16" cy="4" r="2.2" fill="#dcdcdc" stroke="none" />
                  </svg>
                }
                className="w-[25px] justify-center"
              />
              <Btn
                icon={
                  <svg width="20" height="20" viewBox="0 0 20 20">
                    <circle cx="10" cy="10" r="9" fill="#e6e6e6" />
                    <path d="M11 4 V10 L7 14 L4 10 Z" fill="#545454" />
                  </svg>
                }
                className="w-[25px] justify-center"
              />
              <Btn
                icon={
                  <svg width="20" height="20" viewBox="0 0 20 20" fill="none" stroke="#e6e6e6" strokeWidth="1.3">
                    <rect x="1" y="1" width="18" height="18" />
                    <path d="M7 1 V19 M13 1 V19 M1 7 H19 M1 13 H19" />
                  </svg>
                }
                className="w-[25px] justify-center"
              />
              <Btn icon={<PencilIcon s={18} />} className="w-[23px] justify-center" />
            </BtnGroup>
          </div>
          <div className="mt-[8px] flex h-[20px] items-center">
            <span className="ml-[31px] w-[69px]">ID</span>
            <span className="w-[363px]">Name</span>
            <span className="w-[154px]">Start</span>
            <span className="w-[155px]">Finish</span>
            <span>Duration</span>
          </div>
          <div className="mt-[10px] flex h-[149px] flex-col rounded-[4px] border-b border-[#444] bg-[#282828] pt-[5px]">
            <TaskRow
              tri
              marker="w-[37px] pl-[19px]"
              xx="w-[95px]"
              name="HFCC-TD"
              nameW="w-[344px]"
              start="25/05/05*"
              startW="w-[145px]"
              finish="25/05/06*"
              finishW="w-[147px]"
              dur="366D*"
            />
            <TaskRow
              tri
              marker="w-[63px] pl-[45px]"
              xx="w-[92px]"
              name="Site Establisment"
              nameW="w-[334px]"
              start="25/05/05*"
              startW="w-[140px]"
              finish="25/05/06*"
              finishW="w-[143px]"
              dur="366D*"
            />
            <TaskRow
              sel
              marker="w-[82px] pl-[64px]"
              xx="w-[89px]"
              name="Site Hoarding"
              nameW="w-[324px]"
              start="25/05/05"
              startW="w-[136px]"
              finish="25/05/06"
              finishW="w-[139px]"
              dur="366D"
            />
            <TaskRow
              marker="w-[63px] pl-[45px]"
              xx="w-[92px]"
              name="Foundations"
              nameW="w-[335px]"
              start="-"
              startW="w-[141px]"
              finish="-"
              finishW="w-[143px]"
              dur="-"
            />
            <div className="mt-auto flex h-[24px] items-center pb-[1px]">
              <svg className="ml-[14px]" width="6" height="8" viewBox="0 0 6 8">
                <path d="M0.5 0.5 V7.5 L5.5 4 Z" fill="#a8a8a8" />
              </svg>
              <svg className="ml-[442px]" width="14" height="6" viewBox="0 0 14 6" fill="#a8a8a8">
                {[0, 1, 2, 3].map((i) => (
                  <g key={i}>
                    <rect x={i * 3.5} y="0" width="1.6" height="1.6" />
                    <rect x={i * 3.5} y="4" width="1.6" height="1.6" />
                  </g>
                ))}
              </svg>
            </div>
          </div>
        </div>
        {[
          'Task ICOM',
          'Task Quantity Sets',
          'Work Schedule Property Sets',
          'Animation Tools',
          'Work Calendars',
          'Animation Color Scheme',
        ].map((t) => (
          <PropRow key={t} label={t} />
        ))}
      </div>
      <div className="absolute right-0 top-[310px] h-[680px] w-[3px] rounded bg-[#4a4a4a]" />
      <div className="absolute left-0 top-[20px] flex h-[22px] w-[7px] items-center justify-center rounded-r-[3px] bg-[#3a3a3a]">
        <svg width="5" height="10" viewBox="0 0 5 10" fill="none" stroke="#999">
          <path d="M1 1 L4 5 L1 9" />
        </svg>
      </div>
    </div>
  );
}

function BlenderLogo({ color, center, w = 24 }: { color: string; center: string; w?: number }) {
  return (
    <svg width={w} height={(w * 20) / 24} viewBox="0 0 24 20" fill="none">
      <circle cx="15" cy="11.5" r="6.4" stroke={color} strokeWidth="2.8" />
      <circle cx="15" cy="11.5" r="2.7" fill={center} />
      <path d="M15 3.5 H8 M11 7.8 H2 M9 11 L2.5 16" stroke={color} strokeWidth="2.7" strokeLinecap="round" />
    </svg>
  );
}

function TopBar() {
  const tabs: [string, string][] = [
    ['Layout', 'w-[70px]'],
    ['Modeling', 'w-[84px]'],
    ['Sculpting', 'w-[86px]'],
    ['UV Editing', 'w-[91px]'],
    ['Texture Paint', 'w-[113px]'],
    ['Shading', 'w-[77px]'],
    ['Animation', 'w-[89px]'],
    ['Rendering', 'w-[90px]'],
    ['Compositing', 'w-[105px]'],
    ['Geometry Nodes', 'w-[134px]'],
    ['Scripting', 'w-[82px]'],
  ];
  return (
    <div className="flex h-[34px] shrink-0 items-stretch bg-[#181818] font-['Inter',sans-serif] text-[14px]">
      <div className="flex w-[44px] shrink-0 items-center justify-center pb-[2px] pl-[1px]">
        <BlenderLogo color="#e6e6e6" center="#e6e6e6" />
      </div>
      <div className="flex items-center pb-[3px] text-[#e6e6e6]">
        <span className="w-[42px]">File</span>
        <span className="w-[43px]">Edit</span>
        <span className="w-[65px]">Render</span>
        <span className="w-[71px]">Window</span>
        <span className="w-[59px]">Help</span>
      </div>
      <div className="mt-[7px] flex h-[25px] items-stretch">
        {tabs.map(([t, w]) => (
          <div key={t} className={`flex items-center rounded-t-[4px] border-r-2 border-[#181818] bg-[#222] pb-[2px] pl-[12px] text-[#9f9f9f] ${w}`}>
            {t}
          </div>
        ))}
        <div className="flex w-[51px] items-center rounded-t-[4px] bg-[#303030] pb-[2px] pl-[13px] text-white">BIM</div>
        <div className="flex w-[29px] items-center justify-center bg-[#222]">
          <PlusIcon />
        </div>
      </div>
      <div className="ml-auto mr-[10px] flex items-center gap-[8px] pb-[1px]">
        <div className="flex h-[25px] w-[213px] overflow-hidden rounded-[4px] bg-[#2b2b2b]">
          <div className="flex w-[39px] items-center justify-center gap-[1px] border-r border-[#181818]">
            <svg width="20" height="20" viewBox="0 0 20 20" fill="#dcdcdc">
              <path d="M6 1 C3 6 2 8 2 11 A4 4 0 0 0 10 11 C10 8 9 6 6 1 Z" />
              <circle cx="14" cy="5" r="2.5" />
              <circle cx="12" cy="14" r="4.5" fill="none" stroke="#dcdcdc" strokeWidth="1.2" />
            </svg>
            <ChevD s={8} />
          </div>
          <div className="flex flex-1 items-center bg-[#1d1d1d] pb-[2px] pl-[9px] text-[#e0e0e0]">
            <span>Scene</span>
            <svg className="ml-auto mr-[4px]" width="18" height="18" viewBox="0 0 18 18" fill="none" stroke="#6e6e6e" strokeWidth="1.2">
              <path d="M11 1 L17 6 L13 8 L9 13 L5 9 L9 5 Z M6 11 L1 17" />
            </svg>
          </div>
          <div className="flex w-[25px] items-center justify-center bg-[#545454]">
            <CopyIcon />
          </div>
          <div className="flex w-[25px] items-center justify-center opacity-30">
            <PlainX />
          </div>
        </div>
        <div className="flex h-[25px] w-[188px] overflow-hidden rounded-[4px] bg-[#2b2b2b]">
          <div className="flex w-[39px] items-center justify-center gap-[1px] border-r border-[#181818]">
            <svg width="20" height="20" viewBox="0 0 20 20" fill="none" stroke="#dcdcdc" strokeWidth="1.1">
              <rect x="5" y="1" width="13" height="13" fill="#dcdcdc" />
              <path d="M7 12 L11 6 L15 12" stroke="#222" />
              <path d="M3 3 V16 H16 M1 5 V18 H14" />
            </svg>
            <ChevD s={8} />
          </div>
          <div className="flex flex-1 items-center bg-[#1d1d1d] pb-[2px] pl-[9px] text-[#e0e0e0]">ViewLayer</div>
          <div className="flex w-[25px] items-center justify-center bg-[#545454]">
            <CopyIcon />
          </div>
          <div className="flex w-[25px] items-center justify-center opacity-30">
            <PlainX />
          </div>
        </div>
      </div>
    </div>
  );
}

function Mouse({ side }: { side: 'l' | 'r' }) {
  return (
    <svg width="16" height="22" viewBox="0 0 16 22" fill="none" stroke="#8a8a8a" strokeWidth="1.1">
      <rect x="1" y="1" width="14" height="20" rx="5" />
      {side === 'l' ? <rect x="5.5" y="3" width="5" height="8" rx="2" fill="#8a8a8a" /> : <path d="M8 1 H10 A5 5 0 0 1 15 6 V10 H8 Z" fill="#8a8a8a" />}
    </svg>
  );
}

function StatusBar() {
  return (
    <div className="flex h-[30px] shrink-0 items-center bg-[#181818] font-['Inter',sans-serif] text-[14px] text-[#8c8c8c]">
      <div className="ml-[12px] flex w-[93px] items-center gap-[5px]">
        <Mouse side="l" />
        <span>Pan View</span>
      </div>
      <div className="flex items-center gap-[5px]">
        <Mouse side="r" />
        <span>Context Menu</span>
      </div>
      <span className="ml-auto">4.4.0</span>
      <span className="ml-[15px] mr-[15px] text-[14.5px]">Bonsai v0.8.3-alpha250502-c4c3a20</span>
    </div>
  );
}

function OfficeIcon({ back, front, letter, stripes }: { back: string; front: string; letter: string; stripes?: string }) {
  return (
    <svg width="30" height="32" viewBox="0 0 30 32">
      <rect x="7" y="1" width="22" height="30" rx="2" fill={back} />
      {stripes && <rect x="18" y="1" width="11" height="15" fill={stripes} />}
      {stripes && <rect x="7" y="16" width="22" height="15" fill={stripes} opacity="0.6" />}
      <rect x="1" y="8" width="16" height="16" rx="1.5" fill={front} />
      <text x="9" y="21" textAnchor="middle" fontSize="12" fontWeight="700" fontFamily="'Open Sans', sans-serif" fill="#fff">
        {letter}
      </text>
    </svg>
  );
}

function TaskCell({ children, on }: { children: ReactNode; on?: boolean }) {
  return (
    <div className="flex h-full w-[62.2px] shrink-0 justify-center">
      <div className={`flex h-full w-[51px] items-center justify-center border-b-[3px] ${on ? 'border-[#c9b826]' : 'border-transparent'}`}>
        {children}
      </div>
    </div>
  );
}

function Taskbar() {
  return (
    <div className="flex h-[50px] shrink-0 items-stretch bg-linear-to-r from-[#dbdbd6] via-[#e4ddd0] to-[#e6dfcd] font-['Noto_Sans',sans-serif] text-[#1a1a1a]">
      <div className="flex w-[61px] shrink-0 items-center justify-center">
        <svg width="20" height="20" viewBox="0 0 20 20" fill="#000">
          <path d="M0 3 L8.5 1.8 V9.5 H0 Z M9.5 1.6 L20 0 V9.5 H9.5 Z M0 10.5 H8.5 V18.2 L0 17 Z M9.5 10.5 H20 V20 L9.5 18.4 Z" />
        </svg>
      </div>
      <div className="flex w-[358px] shrink-0 items-center overflow-hidden border-y border-[#d4d4d4] bg-white pl-[15px] text-[18px]">
        <Search size={20} strokeWidth={1.3} className="-scale-x-100" />
        <span className="ml-[14px]">Tik hier om te soek</span>
        <svg className="ml-auto" width="98" height="48" viewBox="0 0 98 48">
          <path d="M46 2 C60 2 62 6 68 10 L96 30 C90 38 80 44 60 46 C40 48 20 46 8 40 C6 38 8 34 20 32 C34 28 42 14 46 2 Z" fill="#e59a64" />
          <path d="M46 2 C56 -1 72 8 96 30 L84 26 C74 20 62 16 60 10 C58 6 52 6 46 2 Z" fill="#8f1f1f" />
          <path d="M14 36 C30 24 44 24 62 36 C50 42 28 42 14 36 Z" fill="#c9622c" />
          <path d="M22 38 C22 28 25 20 26 14" stroke="#5a3a1c" strokeWidth="2" fill="none" />
          <path d="M26 14 C18 10 12 14 10 18 M26 14 C20 6 14 8 12 8 M26 14 C30 6 36 8 38 12 M26 14 C32 12 38 16 36 22" stroke="#5f8a2a" strokeWidth="3.2" fill="none" />
          <path d="M78 38 L72 26 M78 38 L78 22 M78 38 L84 26 M78 38 L88 30 M78 38 L68 32" stroke="#6f8f4f" strokeWidth="1.4" />
        </svg>
      </div>
      <div className="ml-[1px] flex h-full items-stretch">
        <TaskCell>
          <svg width="20" height="24" viewBox="0 0 20 24" fill="none" stroke="#111" strokeWidth="1.3">
            <path d="M0 1 H13 M0 5 H13 M0 19 H13 M0 23 H13" />
            <rect x="1" y="8" width="11" height="8" />
            <rect x="17" y="1" width="2.4" height="2.4" fill="#111" stroke="none" />
            <rect x="17" y="11" width="2.4" height="2.4" fill="#111" stroke="none" />
            <rect x="17" y="20" width="2.4" height="2.4" fill="#111" stroke="none" />
          </svg>
        </TaskCell>
        <TaskCell on>
          <svg width="28" height="32" viewBox="0 0 28 32">
            <path d="M14 31 C5 31 1 24 1 17 C1 12 3 9 5 7 C5 9 6 10 7 10 C9 6 12 4 15 1 C15 4 17 5 20 8 C25 11 27 15 27 19 C27 26 21 31 14 31 Z" fill="#f2701d" />
            <path d="M15 1 C15 5 19 6 22 10 C19 9 16 9 14 10 C12 7 13 4 15 1 Z" fill="#ffcf3a" />
            <circle cx="14" cy="18" r="8" fill="#6b3fc4" />
            <path d="M6 16 C8 22 14 26 20 22 C16 22 12 20 10 14 Z" fill="#f03a6a" />
          </svg>
        </TaskCell>
        <TaskCell>
          <svg width="28" height="30" viewBox="0 0 28 30">
            <path d="M1 4 C1 2 2 1 3 1 H13 V6 H1 Z" fill="#d19b1d" />
            <rect x="1" y="5" width="26" height="24" rx="1.5" fill="#f7d46b" />
            <path d="M8 29 V18 H20 V29 H16 V23 H12 V29 Z" fill="#2e8bd8" />
          </svg>
        </TaskCell>
        <TaskCell>
          <OfficeIcon back="#ca64ea" front="#7719aa" letter="N" stripes="#ae4bd5" />
        </TaskCell>
        <TaskCell>
          <svg width="30" height="32" viewBox="0 0 30 32">
            <rect x="3" y="1" width="14" height="12" fill="#33c481" />
            <rect x="10" y="12" width="12" height="10" fill="#21a366" />
            <rect x="16" y="20" width="14" height="11" fill="#107c41" />
            <rect x="1" y="8" width="16" height="16" rx="1.5" fill="#185c37" />
            <text x="9" y="21" textAnchor="middle" fontSize="12" fontWeight="700" fontFamily="'Open Sans', sans-serif" fill="#fff">P</text>
          </svg>
        </TaskCell>
        <TaskCell>
          <svg width="30" height="32" viewBox="0 0 30 32">
            <circle cx="15" cy="16" r="15" fill="#ed6c47" />
            <path d="M15 1 A15 15 0 0 1 30 16 H15 Z" fill="#ff8f6b" />
            <rect x="1" y="8" width="16" height="16" rx="1.5" fill="#c43e1c" />
            <text x="9" y="21" textAnchor="middle" fontSize="12" fontWeight="700" fontFamily="'Open Sans', sans-serif" fill="#fff">P</text>
          </svg>
        </TaskCell>
        <TaskCell on>
          <OfficeIcon back="#21a366" front="#107c41" letter="X" stripes="#185c37" />
        </TaskCell>
        <TaskCell>
          <OfficeIcon back="#2b7cd3" front="#185abd" letter="W" stripes="#41a5ee" />
        </TaskCell>
        <TaskCell on>
          <OfficeIcon back="#0078d4" front="#0a5fa8" letter="O" stripes="#28a8ea" />
        </TaskCell>
        <div className="ml-[2px] flex h-full w-[61px] items-center justify-center border-b-[3px] border-[#c9b826] bg-[#f4efe4]">
          <BlenderLogo color="#e87d0d" center="#265787" w={30} />
        </div>
      </div>
      <div className="ml-auto flex h-full w-[465px] shrink-0 items-center text-[16.5px]">
        <div className="relative flex w-[36px] items-center pl-[1px]">
          <svg width="24" height="30" viewBox="0 0 24 30">
            <ellipse cx="11" cy="16" rx="11" ry="13" fill="#f08a1d" />
            <ellipse cx="10" cy="12" rx="8" ry="8" fill="#f4a52a" />
          </svg>
          <span className="absolute left-[11px] top-[-4px] flex h-[15px] w-[15px] items-center justify-center rounded-full bg-[#c9281e] text-[10px] text-white">
            1
          </span>
        </div>
        <span className="w-[120px] whitespace-pre">23°C  Sunny</span>
        <div className="flex w-[30px] justify-center">
          <svg width="16" height="10" viewBox="0 0 16 10" fill="none" stroke="#111" strokeWidth="1.2">
            <path d="M1 9 L8 1.5 L15 9" />
          </svg>
        </div>
        <div className="flex w-[32px] justify-center">
          <svg width="18" height="24" viewBox="0 0 18 24" fill="none" stroke="#111" strokeWidth="1.2">
            <rect x="1" y="4" width="11" height="14" rx="1" />
            <path d="M12 8 L17 6 V16 L12 14 M3 1 H10 M3 22 H10" />
          </svg>
        </div>
        <div className="flex w-[28px] justify-center">
          <svg width="24" height="22" viewBox="0 0 24 22">
            <path d="M2 14 A5 5 0 0 1 5 6 A8 8 0 0 1 20 8 A5 5 0 0 1 20 17 H5 Z" fill="#777" />
            <circle cx="16" cy="15" r="6" fill="#fff" />
            <circle cx="16" cy="15" r="4" fill="none" stroke="#0a78d4" strokeWidth="1.6" />
          </svg>
        </div>
        <div className="flex w-[32px] justify-center">
          <svg width="24" height="20" viewBox="0 0 24 20">
            <rect x="6" y="4" width="17" height="12" fill="#111" />
            <rect x="10" y="6" width="9" height="8" fill="#e5dfce" />
            <path d="M2 2 V6 M5 2 V6 M0.5 6 H6.5 V9 L3.5 11 L0.5 9 Z M3.5 11 V18" stroke="#111" strokeWidth="1.2" fill="none" />
          </svg>
        </div>
        <div className="flex w-[32px] justify-center">
          <svg width="20" height="20" viewBox="0 0 20 20" fill="none" stroke="#9a9a9a" strokeWidth="1.3">
            <path d="M1 15 A15 15 0 0 1 14 1 M5 16 A10 10 0 0 1 14 6" />
            <path d="M9 17 A6 6 0 0 1 14 11" stroke="#333" />
            <circle cx="14" cy="17" r="1.6" fill="#111" stroke="none" />
          </svg>
        </div>
        <div className="flex w-[86px] flex-col items-center text-[14px] leading-[24px]">
          <span>11:07</span>
          <span>2025/05/06</span>
        </div>
        <div className="relative flex w-[69px] pl-[20px]">
          <svg width="20" height="22" viewBox="0 0 20 22">
            <path d="M0 0 H19 V16 H6 L0 21 Z" fill="#000" />
            <path d="M4 4 H15 M4 8 H15 M4 12 H15" stroke="#eee" strokeWidth="1.2" />
          </svg>
          <span className="absolute left-[27px] top-[6px] flex h-[21px] w-[21px] items-center justify-center rounded-full border border-[#777] bg-[#d8d4c8] text-[13px] font-bold">
            2
          </span>
        </div>
      </div>
    </div>
  );
}

export default function App() {
  return (
    <div className="relative flex h-[1080px] w-[1920px] flex-col overflow-hidden bg-[#181818]">
      <div className="flex h-[29px] shrink-0 items-center bg-white font-['Noto_Sans',sans-serif] text-[14px] text-[#111]">
        <div className="flex w-[28px] justify-center pl-[3px]">
          <BlenderLogo color="#e87d0d" center="#265787" w={21} />
        </div>
        <span>* (Unsaved) - Blender 4.4.0</span>
        <div className="ml-auto flex items-center">
          <div className="flex w-[57px] justify-center">
            <Minus size={16} strokeWidth={1} color="#111" />
          </div>
          <div className="flex w-[60px] justify-center">
            <svg width="12" height="14" viewBox="0 0 12 14" fill="none" stroke="#111" strokeWidth="1">
              <rect x="0.5" y="3" width="8" height="10.5" />
              <path d="M3 3 V0.5 H11.5 V11 H8.5" />
            </svg>
          </div>
          <div className="flex w-[62px] justify-center pr-[2px]">
            <X size={20} strokeWidth={1} color="#111" />
          </div>
        </div>
      </div>
      <TopBar />
      <div className="flex h-[937px] shrink-0 bg-[#181818]">
        <div className="h-full w-[342px] shrink-0 font-['Inter',sans-serif]">
          <Outliner />
        </div>
        <Viewport />
        <div className="w-[4px] shrink-0" />
        <Properties />
      </div>
      <StatusBar />
      <Taskbar />

      {/* annotation drawn on top of the screenshot */}
      <svg className="absolute left-0 top-0" width="1920" height="1080" viewBox="0 0 1920 1080" fill="none">
        <line x1="1403" y1="556" x2="1745" y2="712" stroke="#f23b3b" strokeWidth="4" />
        <path d="M1762 723 L1736 721 L1749 705 Z" fill="#f23b3b" />
        <path d="M1647 758 V773 L1651 769.5 L1654 775 L1656.5 774 L1654 768.5 L1658 768 Z" fill="#fff" stroke="#111" strokeWidth="1" />
      </svg>
      <div className="absolute left-[1028px] top-[532px] flex h-[45px] w-[375px] items-center justify-center rounded-[2px] bg-[#f23b3b] font-['Liberation_Sans',sans-serif] text-[21.6px] text-white">
        This value should be 2D (Two days)
      </div>
    </div>
  );
}
